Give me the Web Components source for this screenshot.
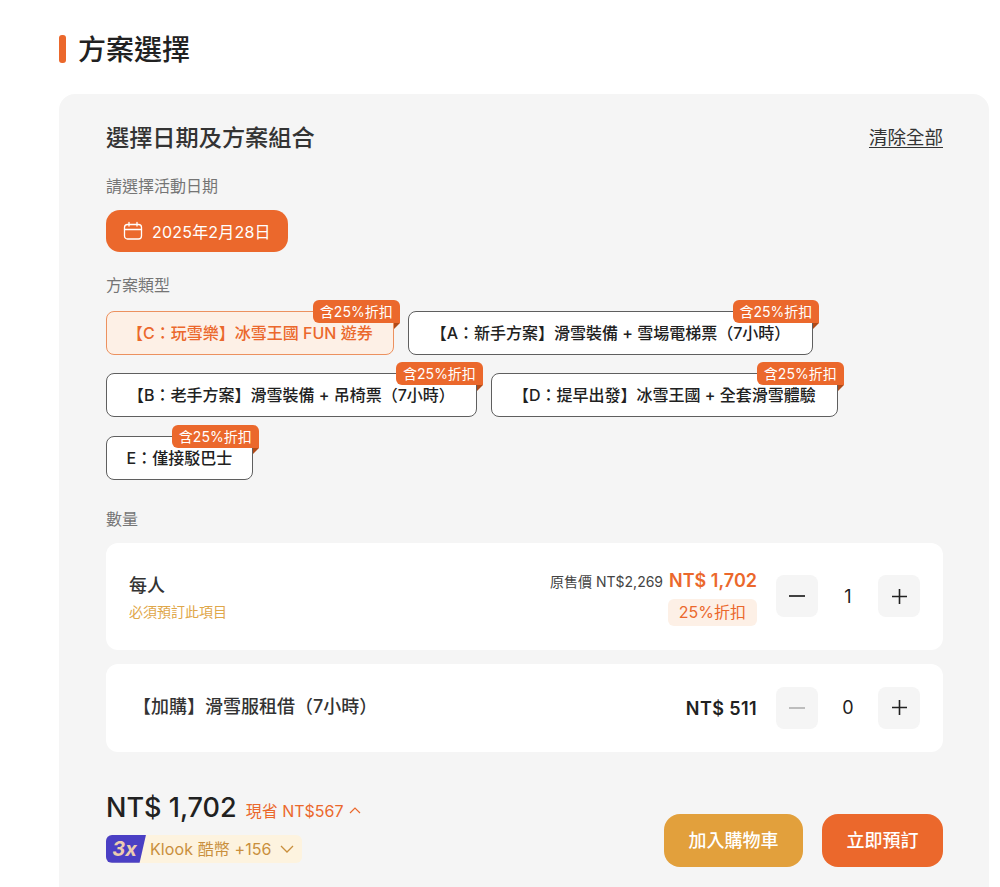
<!DOCTYPE html>
<html lang="zh-Hant">
<head>
<meta charset="utf-8">
<title>方案選擇</title>
<style>
  html { overflow: hidden; }
  body {
    margin: 0;
    padding: 35px 11px 0 59px;
    background: #fff;
    color: #212121;
    font-family: Inter, "Noto Sans CJK TC", sans-serif;
  }
</style>
</head>
<body>
  <section-title>方案選擇</section-title>
  <option-panel>
    <span slot="title">選擇日期及方案組合</span>
    <span slot="clear">清除全部</span>

    <field-label first>請選擇活動日期</field-label>
    <date-button>2025年2月28日</date-button>

    <field-label>方案類型</field-label>
    <chip-list>
      <package-chip selected style="--chip-pad:0 20px">【C：玩雪樂】冰雪王國 FUN 遊券</package-chip>
      <package-chip style="--chip-pad:0 22px">【A：新手方案】滑雪裝備 + 雪場電梯票（7小時）</package-chip>
      <package-chip>【B：老手方案】滑雪裝備 + 吊椅票（7小時）</package-chip>
      <package-chip>【D：提早出發】冰雪王國 + 全套滑雪體驗</package-chip>
      <package-chip style="--chip-pad:0 19.5px">E：僅接駁巴士</package-chip>
    </chip-list>

    <field-label qty>數量</field-label>
    <qty-card style="--card-h:107px" count="1">
      <span slot="name">每人</span>
      <span slot="note">必須預訂此項目</span>
      <span slot="was">原售價 NT$2,269</span>
      <span slot="price" class="now">NT$ 1,702</span>
      <span slot="off">25%折扣</span>
    </qty-card>
    <qty-card style="--card-h:88px;--name-left:4px" count="0" empty>
      <span slot="name">【加購】滑雪服租借（7小時）</span>
      <span slot="price" class="plain">NT$ 511</span>
    </qty-card>

    <total-bar></total-bar>
  </option-panel>

<script>
const ORANGE = "#eb682c";

class SectionTitle extends HTMLElement {
  constructor() {
    super();
    this.attachShadow({ mode: "open" }).innerHTML = `
      <style>
        :host { display: flex; align-items: center; gap: 12px; height: 28px; margin-bottom: 31px; }
        i { width: 7px; height: 28px; border-radius: 3px; background: ${ORANGE}; }
        h2 { margin: 2px 0 0; font-size: 28px; line-height: 28px; font-weight: 500; color: #212121; }
      </style>
      <i></i><h2><slot></slot></h2>
    `;
  }
}
customElements.define("section-title", SectionTitle);

class OptionPanel extends HTMLElement {
  constructor() {
    super();
    this.attachShadow({ mode: "open" }).innerHTML = `
      <style>
        :host { display: block; background: #f5f5f5; border-radius: 16px; padding: 26px 46px 40px 47px; }
        header { display: flex; justify-content: space-between; align-items: center; height: 32px; }
        .title { font-size: 23.2px; font-weight: 500; color: #333; }
        .clear { font-size: 18.5px; color: #333; text-decoration: underline; text-underline-offset: 3px; }
      </style>
      <header>
        <div class="title"><slot name="title"></slot></div>
        <div class="clear"><slot name="clear"></slot></div>
      </header>
      <slot></slot>
    `;
  }
}
customElements.define("option-panel", OptionPanel);

class FieldLabel extends HTMLElement {
  constructor() {
    super();
    this.attachShadow({ mode: "open" }).innerHTML = `
      <style>
        :host { display: block; height: 24px; margin: 21px 0 14px; font-size: 16px; line-height: 24px; color: #757575; }
        :host([first]) { margin: 22px 0 12px; }
        :host([qty]) { margin: 27px 0 12px; }
      </style>
      <slot></slot>
    `;
  }
}
customElements.define("field-label", FieldLabel);

class DateButton extends HTMLElement {
  constructor() {
    super();
    this.attachShadow({ mode: "open" }).innerHTML = `
      <style>
        :host { display: flex; width: fit-content; align-items: center; gap: 9px; height: 42px; padding: 0 17px 0 17px; border-radius: 14px; background: ${ORANGE}; color: #fff; font-size: 16px; font-weight: 400; letter-spacing: 0.2px; }
        svg { display: block; }
      </style>
      <svg width="20" height="20" viewBox="0 0 20 20" fill="none" stroke="#fff" stroke-width="1.3" stroke-linecap="round">
        <rect x="1.5" y="3.5" width="17" height="14.5" rx="3"/>
        <path d="M1.5 8.5h17M6 1.5v3.5M14 1.5v3.5"/>
      </svg>
      <span><slot></slot></span>
    `;
  }
}
customElements.define("date-button", DateButton);

class ChipList extends HTMLElement {
  constructor() {
    super();
    this.attachShadow({ mode: "open" }).innerHTML = `
      <style>
        :host { display: flex; flex-wrap: wrap; gap: 18.4px 14px; }
      </style>
      <slot></slot>
    `;
  }
}
customElements.define("chip-list", ChipList);

class PackageChip extends HTMLElement {
  constructor() {
    super();
    this.attachShadow({ mode: "open" }).innerHTML = `
      <style>
        :host { display: block; position: relative; box-sizing: border-box; height: 44px; border: 1px solid #5f5f5f; border-radius: 8px; background: #fff; color: #212121; font-size: 16px; font-weight: 500; line-height: 42px; padding: var(--chip-pad, 0 21px); white-space: nowrap; }
        :host([selected]) { background: #fdf0e6; border-color: #ec915f; color: ${ORANGE}; }
        .tag { position: absolute; top: -12px; right: -7px; height: 23px; padding: 0 7px; border-radius: 6px 6px 0 6px; background: ${ORANGE}; color: #fff; font-size: 14px; font-weight: 400; line-height: 23px; }
        .fold { position: absolute; top: 11px; right: -7px; width: 0; height: 0; border-top: 6px solid #b24a18; border-right: 6px solid transparent; }
      </style>
      <slot></slot>
      <span class="tag">含25%折扣</span><i class="fold"></i>
    `;
  }
}
customElements.define("package-chip", PackageChip);

class QtyStepper extends HTMLElement {
  constructor() {
    super();
    this.attachShadow({ mode: "open" }).innerHTML = `
      <style>
        :host { display: grid; grid-template-columns: 42px 60px 42px; align-items: center; text-align: center; font-size: 18px; color: #212121; }
        .btn { width: 42px; height: 42px; border-radius: 8px; background: #f5f5f5; display: flex; align-items: center; justify-content: center; }
        svg { display: block; stroke: #212121; }
        :host([empty]) .minus svg { stroke: #b3b3b3; }
      </style>
      <div class="btn minus"><svg width="16" height="16" viewBox="0 0 16 16" fill="none" stroke-width="1.7"><path d="M0 8h16"/></svg></div>
      <span>${this.getAttribute("count") || "0"}</span>
      <div class="btn"><svg width="15" height="15" viewBox="0 0 15 15" fill="none" stroke-width="1.6"><path d="M0 7.5h15M7.5 0v15"/></svg></div>
    `;
  }
}
customElements.define("qty-stepper", QtyStepper);

class QtyCard extends HTMLElement {
  constructor() {
    super();
    const empty = this.hasAttribute("empty") ? "empty" : "";
    this.attachShadow({ mode: "open" }).innerHTML = `
      <style>
        :host { display: flex; align-items: center; justify-content: space-between; box-sizing: border-box; height: var(--card-h); margin-bottom: 14px; padding: 0 23px; border-radius: 12px; background: #fff; }
        .info { padding: 2px 0 0 var(--name-left, 0); }
        .name { font-size: 18px; font-weight: 500; color: #333; line-height: 26px; }
        .note { font-size: 14px; color: #dfa74a; line-height: 20px; margin-top: 3px; }
        .right { display: flex; align-items: center; gap: 19px; }
        .prices { display: flex; flex-direction: column; align-items: flex-end; padding-top: 2px; }
        .line { display: flex; align-items: baseline; gap: 6px; }
        .was { font-size: 14px; color: #444; }
        .price { font-size: 18px; font-weight: 600; color: #212121; line-height: 26px; }
        ::slotted(.now) { color: ${ORANGE}; }
        ::slotted(.plain) { letter-spacing: 0.4px; }
        .off { display: none; margin-top: 5px; height: 27px; box-sizing: border-box; padding: 0 11px; border-radius: 6px; background: #fdf0e6; color: ${ORANGE}; font-size: 16px; line-height: 27px; }
        :host([count="1"]) .off { display: block; }
      </style>
      <div class="info">
        <div class="name"><slot name="name"></slot></div>
        <div class="note"><slot name="note"></slot></div>
      </div>
      <div class="right">
        <div class="prices">
          <div class="line">
            <span class="was"><slot name="was"></slot></span>
            <span class="price"><slot name="price"></slot></span>
          </div>
          <div class="off"><slot name="off"></slot></div>
        </div>
        <qty-stepper count="${this.getAttribute("count")}" ${empty}></qty-stepper>
      </div>
    `;
  }
}
customElements.define("qty-card", QtyCard);

class TotalBar extends HTMLElement {
  constructor() {
    super();
    this.attachShadow({ mode: "open" }).innerHTML = `
      <style>
        :host { display: flex; justify-content: space-between; align-items: flex-start; margin-top: 36px; }
        .sum { display: flex; align-items: baseline; gap: 9px; height: 40px; line-height: 40px; }
        .total { font-size: 27px; font-weight: 500; color: #212121; }
        .save { display: flex; align-items: center; gap: 5px; font-size: 16px; color: ${ORANGE}; }
        .coins { display: flex; width: fit-content; height: 28px; margin-top: 7px; border-radius: 6px; background: #fdf3df; font-size: 16px; line-height: 28px; color: #c98f3c; }
        .mult { width: 40px; background: #4a3fc4; color: #eccdb0; font-size: 20px; font-weight: 700; font-style: italic; text-align: center; clip-path: polygon(0 0, 100% 0, 84% 100%, 0 100%); border-radius: 6px 0 0 6px; padding-right: 3px; box-sizing: border-box; }
        .klook { display: flex; align-items: center; gap: 8px; padding: 0 8px 0 4px; letter-spacing: 0.1px; }
        .actions { display: flex; gap: 19px; padding-top: 26px; }
        .buy { height: 53px; line-height: 53px; border-radius: 16px; color: #fff; font-size: 18px; font-weight: 500; text-align: center; }
        .cart { width: 139px; background: #e2a03c; }
        .now { width: 121px; background: ${ORANGE}; }
      </style>
      <div>
        <div class="sum">
          <span class="total">NT$ 1,702</span>
          <span class="save">現省 NT$567
            <svg width="12" height="7" viewBox="0 0 12 7" fill="none" stroke="${ORANGE}" stroke-width="1.2"><path d="M1 6l5-5 5 5"/></svg>
          </span>
        </div>
        <div class="coins">
          <span class="mult">3x</span>
          <span class="klook">Klook 酷幣 +156
            <svg width="14" height="8" viewBox="0 0 14 8" fill="none" stroke="#c98f3c" stroke-width="1.3"><path d="M1 1l6 6 6-6"/></svg>
          </span>
        </div>
      </div>
      <div class="actions">
        <div class="buy cart">加入購物車</div>
        <div class="buy now">立即預訂</div>
      </div>
    `;
  }
}
customElements.define("total-bar", TotalBar);
</script>
</body>
</html>
